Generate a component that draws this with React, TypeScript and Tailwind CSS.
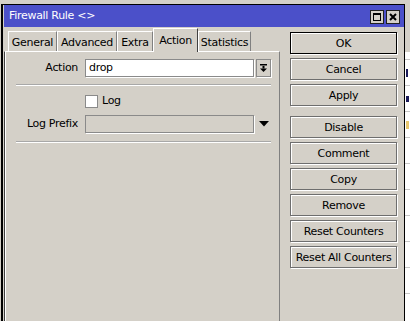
import React from "react";

const btnBase =
  "h-[22px] w-full flex items-center justify-center bg-[#d4d0c8] text-black border shadow-[1px_1px_0_#ffffff,inset_1px_1px_0_#ffffff]";

function Btn({ label, def }: { label: string; def?: boolean }) {
  return (
    <div className={btnBase + (def ? " border-black" : " border-[#6e6e6e]")}>
      <span className="leading-none">{label}</span>
    </div>
  );
}

function Tab({ label, w, active }: { label: string; w: string; active?: boolean }) {
  if (active) {
    return (
      <div
        className={
          "relative z-10 -mb-[1px] h-[24px] flex justify-center pt-[4px] bg-[#d4d0c8] border-t border-l border-white border-r border-r-[#404040] " +
          w
        }
      >
        {label}
      </div>
    );
  }
  return (
    <div
      className={
        "h-[20px] flex justify-center pt-[3px] bg-[#d4d0c8] border-t border-l border-white border-r border-r-[#808080] " +
        w
      }
    >
      {label}
    </div>
  );
}

export default function App() {
  return (
    <div
      className="relative w-[410px] h-[321px] overflow-hidden bg-[#d4d0c8] text-[11px] tracking-[-0.3px] text-black"
      style={{ fontFamily: '"DejaVu Sans", sans-serif' }}
    >
      {/* background window glimpse */}
      <div className="absolute left-[405px] top-[52px] w-[5px] h-[269px] bg-white flex flex-col">
        <div className="h-[8px] border-b border-[#c8c8c8]" />
        <div className="h-[26px] border-b border-[#c8c8c8] flex items-center">
          <div className="w-[2px] h-[8px] ml-[1px] bg-[#1c1c5a]" />
        </div>
        <div className="h-[26px] border-b border-[#c8c8c8] flex items-center">
          <div className="w-[3px] h-[6px] ml-[1px] bg-[#1c1c5a]" />
        </div>
        <div className="h-[26px] border-b border-[#c8c8c8] flex items-center">
          <div className="w-[3px] h-[8px] ml-[1px] bg-[#e8c870]" />
        </div>
        <div className="h-[26px] border-b border-[#c8c8c8]" />
        <div className="h-[26px] border-b border-[#c8c8c8]" />
        <div className="h-[26px] border-b border-[#c8c8c8]" />
        <div className="h-[26px] border-b border-[#c8c8c8]" />
        <div className="h-[26px] border-b border-[#c8c8c8]" />
        <div className="h-[26px] border-b border-[#c8c8c8]" />
      </div>

      {/* window */}
      <div className="absolute left-[1px] top-[4px] w-[404px] h-[330px] border-t border-black border-l-2 border-r border-black bg-[#d4d0c8] flex flex-col">
        {/* title bar */}
        <div className="h-[22px] ml-[1px] bg-[#4b50c9] flex items-center pl-[5px] pr-[4px]">
          <span className="text-white text-[11px] mt-[1px]">Firewall Rule &lt;&gt;</span>
          <div className="ml-auto flex gap-[2px] mt-[2px]">
            <div className="w-[14px] h-[14px] bg-[#d4d0c8] border border-[#202020] flex items-center justify-center">
              <div className="w-[8px] h-[8px] border border-black border-t-2" />
            </div>
            <div className="w-[14px] h-[14px] bg-[#d4d0c8] border border-[#202020] flex items-center justify-center">
              <svg width="8" height="8" viewBox="0 0 8 8">
                <path d="M1 1 L7 7 M7 1 L1 7" stroke="#000" strokeWidth="2" />
              </svg>
            </div>
          </div>
        </div>

        {/* body */}
        <div className="flex flex-1 pl-[1px]">
          {/* left: tabs + panel */}
          <div className="w-[276px] flex flex-col">
            <div className="h-[24px] flex items-end pl-[4px]">
              <Tab label="General" w="w-[49px]" />
              <Tab label="Advanced" w="w-[60px]" />
              <Tab label="Extra" w="w-[36px]" />
              <Tab label="Action" w="w-[45px]" active />
              <Tab label="Statistics" w="w-[53px]" />
            </div>
            <div className="flex-1 border-t border-white border-l border-l-[#404040] border-r border-r-[#808080] shadow-[inset_1px_0_0_#ffffff] pl-[2px] pt-[7px] flex flex-col">
              {/* Action row */}
              <div className="flex items-center h-[18px]">
                <div className="w-[72px] text-right pr-[1px]">Action</div>
                <div className="ml-[6px] w-[169px] h-[18px] bg-white border border-[#8a8a8a] shadow-[1px_1px_0_#ffffff] flex items-center pl-[3px]">
                  drop
                </div>
                <div className="ml-[2px] w-[15px] h-[18px] bg-[#d4d0c8] border border-[#8a8a8a] shadow-[1px_1px_0_#ffffff] flex items-center justify-center">
                  <svg width="9" height="10" viewBox="0 0 9 10">
                    <rect x="1" y="1" width="7" height="1.5" fill="#000" />
                    <rect x="3.5" y="3" width="2" height="2.5" fill="#000" />
                    <path d="M1 5.5 H8 L4.5 9 Z" fill="#000" />
                  </svg>
                </div>
              </div>
              {/* separator */}
              <div className="mt-[7px] ml-[9px] w-[255px] h-[2px] border-t border-[#a8a8a8] border-b border-b-white" />
              {/* Log checkbox */}
              <div className="mt-[8px] flex items-center h-[14px]">
                <div className="ml-[78px] w-[13px] h-[13px] bg-white border border-[#8a8a8a]" />
                <span className="ml-[4px]">Log</span>
              </div>
              {/* Log Prefix */}
              <div className="mt-[7px] flex items-center h-[18px]">
                <div className="w-[72px] text-right pr-[1px]">Log Prefix</div>
                <div className="ml-[6px] w-[169px] h-[18px] bg-[#d4d0c8] border border-[#8a8a8a] shadow-[1px_1px_0_#ffffff]" />
                <div className="ml-[2px] w-[15px] h-[18px] flex items-center justify-center">
                  <svg width="10" height="6" viewBox="0 0 10 6">
                    <path d="M0 0 H10 L5 5.5 Z" fill="#000" />
                  </svg>
                </div>
              </div>
              {/* separator */}
              <div className="mt-[8px] ml-[9px] w-[255px] h-[2px] border-t border-[#a8a8a8] border-b border-b-white" />
            </div>
          </div>

          {/* right buttons */}
          <div className="ml-[10px] w-[107px] pt-[5px] flex flex-col">
            <div className="flex flex-col gap-[4px]">
              <Btn label="OK" def />
              <Btn label="Cancel" />
              <Btn label="Apply" />
            </div>
            <div className="mt-[10px] flex flex-col gap-[4px]">
              <Btn label="Disable" />
              <Btn label="Comment" />
              <Btn label="Copy" />
              <Btn label="Remove" />
              <Btn label="Reset Counters" />
              <Btn label="Reset All Counters" />
            </div>
          </div>
        </div>
      </div>
    </div>
  );
}
